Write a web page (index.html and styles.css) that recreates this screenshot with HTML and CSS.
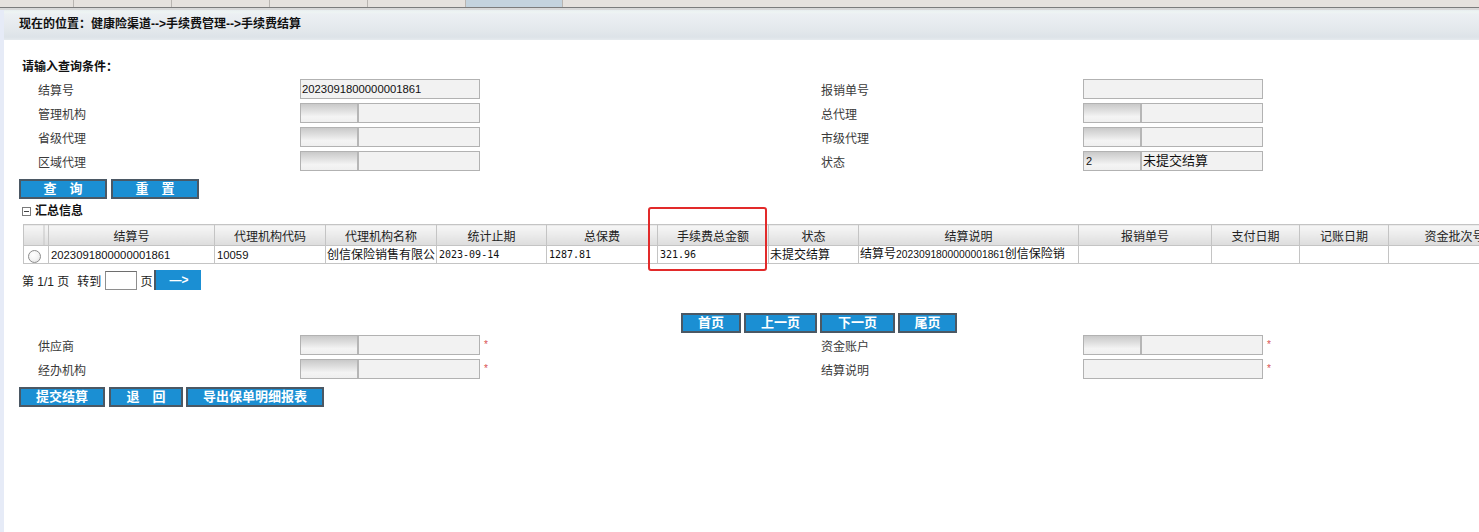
FILE: index.html
```html
<!DOCTYPE html>
<html lang="zh-CN">
<head>
<meta charset="utf-8">
<title>手续费结算</title>
<link rel="stylesheet" href="styles.css">
</head>
<body>
<div class="tabs">
  <div class="tab first"></div>
  <div class="tab"></div>
  <div class="tab"></div>
  <div class="tab"></div>
  <div class="tab"></div>
  <div class="tab active"></div>
  <div class="tab-rest"></div>
</div>
<div class="tabs-under"></div>
<div class="page">
  <div class="strip"></div>
  <div class="main">
    <div class="crumb">现在的位置：健康险渠道-->手续费管理-->手续费结算</div>
    <div class="content">
      <div class="title">请输入查询条件：</div>
      <div class="form">
        <div class="lbl">结算号</div>
        <div class="cell"><div class="field"><span class="val">2023091800000001861</span></div></div>
        <div class="lbl">报销单号</div>
        <div class="cell"><div class="field"></div></div>

        <div class="lbl">管理机构</div>
        <div class="cell"><div class="field code"><span class="c"></span><span class="n"></span></div></div>
        <div class="lbl">总代理</div>
        <div class="cell"><div class="field code"><span class="c"></span><span class="n"></span></div></div>

        <div class="lbl">省级代理</div>
        <div class="cell"><div class="field code"><span class="c"></span><span class="n"></span></div></div>
        <div class="lbl">市级代理</div>
        <div class="cell"><div class="field code"><span class="c"></span><span class="n"></span></div></div>

        <div class="lbl">区域代理</div>
        <div class="cell"><div class="field code"><span class="c"></span><span class="n"></span></div></div>
        <div class="lbl">状态</div>
        <div class="cell"><div class="field code"><span class="c">2</span><span class="n big">未提交结算</span></div></div>
      </div>

      <div class="btns top-btns">
        <span class="btn w88">查　询</span>
        <span class="btn w88">重　置</span>
      </div>

      <div class="section"><span class="minus"></span>汇总信息</div>

      <div class="tablewrap">
        <table class="grid">
          <colgroup>
            <col style="width:25px"><col style="width:166px"><col style="width:111px"><col style="width:111px">
            <col style="width:110px"><col style="width:111px"><col style="width:111px"><col style="width:90px">
            <col style="width:220px"><col style="width:133px"><col style="width:88px"><col style="width:89px">
            <col style="width:132px">
          </colgroup>
          <thead>
            <tr>
              <th class="rc"></th><th>结算号</th><th>代理机构代码</th><th>代理机构名称</th>
              <th>统计止期</th><th>总保费</th><th>手续费总金额</th><th>状态</th>
              <th>结算说明</th><th>报销单号</th><th>支付日期</th><th>记账日期</th><th>资金批次号</th>
            </tr>
          </thead>
          <tbody>
            <tr>
              <td class="rc"><span class="radio"></span></td>
              <td>2023091800000001861</td>
              <td>10059</td>
              <td class="cn">创信保险销售有限公</td>
              <td class="mono">2023-09-14</td>
              <td class="mono">1287.81</td>
              <td class="mono">321.96</td>
              <td class="cn">未提交结算</td>
              <td class="cn">结算号<span class="num">2023091800000001861</span>创信保险销</td>
              <td></td><td></td><td></td><td></td>
            </tr>
          </tbody>
        </table>
        <div class="mark"></div>
      </div>

      <div class="pager">
        <span>第 1/1 页</span>
        <span class="goto">转到</span>
        <span class="pin"></span>
        <span>页</span>
        <span class="btn go">—&gt;</span>
      </div>

      <div class="paging">
        <span class="btn w60">首页</span>
        <span class="btn w73">上一页</span>
        <span class="btn w75">下一页</span>
        <span class="btn w59">尾页</span>
      </div>

      <div class="form lower">
        <div class="lbl">供应商</div>
        <div class="cell"><div class="field code"><span class="c"></span><span class="n"></span></div><span class="req">*</span></div>
        <div class="lbl">资金账户</div>
        <div class="cell"><div class="field code"><span class="c"></span><span class="n"></span></div><span class="req">*</span></div>

        <div class="lbl">经办机构</div>
        <div class="cell"><div class="field code"><span class="c"></span><span class="n"></span></div><span class="req">*</span></div>
        <div class="lbl">结算说明</div>
        <div class="cell"><div class="field"></div><span class="req">*</span></div>
      </div>

      <div class="btns bottom-btns">
        <span class="btn w86">提交结算</span>
        <span class="btn w74">退　回</span>
        <span class="btn w138 tight">导出保单明细报表</span>
      </div>
    </div>
  </div>
</div>
</body>
</html>
```
FILE: styles.css
```css
html, body {
  margin: 0;
  padding: 0;
  overflow: hidden;
  background: #ffffff;
}
body {
  font-family: "Liberation Sans", "Noto Sans CJK SC", sans-serif;
  font-size: 12px;
  color: #222;
  width: 1479px;
  height: 532px;
}

/* top tab strip */
.tabs {
  display: flex;
  height: 7px;
  background: #e6e2de;
  border-bottom: 1px solid #7c7c7c;
}
.tab {
  width: 97px;
  flex: none;
  border-right: 1px solid #b9b5b1;
}
.tab.first { width: 73px; }
.tab.active {
  background: #c4d3de;
  width: 96px;
}
.tab-rest { flex: 1; }
.tabs-under {
  height: 2px;
  background: #d9d9d9;
}

.page {
  display: flex;
  height: 522px;
}
.strip {
  width: 4px;
  flex: none;
  background: #e6ebf7;
}
.main {
  flex: 1;
  min-width: 0;
  overflow: hidden;
}

.crumb {
  height: 30px;
  line-height: 28px;
  box-sizing: border-box;
  padding-left: 15px;
  font-weight: bold;
  font-size: 12px;
  color: #111;
  background: linear-gradient(to bottom, #e8eef0 0px, #eef5f3 2px, #ecf0f3 4px, #e3e8ec 20px, #dde3e8 27px, #e5eaee 30px);
}

.content {
  padding-left: 15px;
}

.title {
  margin-top: 19px;
  margin-left: 3px;
  height: 16px;
  line-height: 16px;
  font-weight: bold;
  color: #111;
}

.form {
  display: grid;
  grid-template-columns: 262px 521px 262px 400px;
  grid-auto-rows: 24px;
  padding-left: 19px;
  margin-top: 2px;
}
.form.lower { margin-top: 0; }
.lbl {
  display: flex;
  align-items: center;
  color: #3a3a3a;
}
.cell {
  display: flex;
  align-items: center;
}
.field {
  width: 180px;
  height: 20px;
  box-sizing: border-box;
  border: 1px solid #b2b2b2;
  background: #f2f2f2;
  display: flex;
  overflow: hidden;
}
.field .val {
  font-size: 11.3px;
  line-height: 18px;
  padding-left: 1px;
  color: #111;
}
.field.code .c {
  width: 58px;
  flex: none;
  border-right: 2px solid #b6b6b6;
  background: linear-gradient(to bottom, #c9c9c9 0%, #e4e4e4 45%, #f4f4f4 70%, #efefef 100%);
  font-size: 11px;
  line-height: 18px;
  padding-left: 2px;
  box-sizing: border-box;
  color: #111;
}
.field.code .n {
  flex: 1;
  background: #f2f2f2;
  line-height: 18px;
  padding-left: 1px;
}
.field.code .n.big {
  font-size: 13px;
  color: #111;
}
.req {
  color: #d85050;
  font-size: 10px;
  margin-left: 4px;
  margin-top: -2px;
}

/* buttons */
.btns {
  display: flex;
  gap: 4px;
}
.top-btns { margin-top: 6px; }
.bottom-btns { margin-top: 6px; }
.btn {
  display: inline-flex;
  align-items: center;
  justify-content: center;
  height: 20px;
  box-sizing: border-box;
  border: 2px solid #4b5864;
  background: #1b8fd3;
  color: #ffffff;
  font-weight: bold;
  font-size: 13px;
  line-height: 16px;
}
.btn.tight { margin-left: -1px; }
.w88 { width: 88px; }
.w86 { width: 86px; }
.w74 { width: 74px; }
.w138 { width: 138px; }
.w60 { width: 60px; }
.w73 { width: 73px; }
.w75 { width: 75px; }
.w59 { width: 59px; }

.section {
  margin-top: 5px;
  margin-left: 3px;
  height: 14px;
  line-height: 14px;
  font-weight: bold;
  color: #111;
  display: flex;
  align-items: center;
}
.minus {
  width: 7px;
  height: 7px;
  border: 1px solid #7a7a7a;
  margin-right: 4px;
  position: relative;
  background: #fff;
}
.minus::after {
  content: "";
  position: absolute;
  left: 1px;
  right: 1px;
  top: 3px;
  height: 1px;
  background: #444;
}

/* table */
.tablewrap {
  position: relative;
  margin-top: 6px;
  margin-left: 4px;
  width: 1497px;
}
.grid {
  border-collapse: collapse;
  table-layout: fixed;
  width: 1497px;
}
.grid th {
  height: 20px;
  padding: 0;
  font-weight: normal;
  font-size: 12px;
  color: #222;
  border: 1px solid #c4c4c4;
  background: linear-gradient(to bottom, #f6f6f6 0%, #ececec 45%, #dcdcdc 100%);
  white-space: nowrap;
  overflow: hidden;
}
.grid th.rc {
  background:
    linear-gradient(to right, transparent 19px, #c4c4c4 19px, #c4c4c4 20px, transparent 20px),
    linear-gradient(to bottom, #f6f6f6 0%, #ececec 45%, #dcdcdc 100%);
}
.grid td {
  height: 16px;
  padding: 0 0 0 2px;
  border: 1px solid #c4c4c4;
  background: #fff;
  white-space: nowrap;
  overflow: hidden;
  font-size: 11.3px;
  line-height: 16px;
  color: #111;
}
.grid td.mono {
  font-family: "DejaVu Sans Mono", "Noto Sans CJK SC", monospace;
  font-size: 10px;
}
.grid td.cn {
  padding-left: 1px;
  font-size: 12px;
}
.grid td .num {
  font-size: 10.3px;
}
.grid td.rc {
  padding: 0;
  text-align: center;
}
.radio {
  display: inline-block;
  width: 11px;
  height: 11px;
  border-radius: 50%;
  border: 1px solid #8c8c8c;
  background: radial-gradient(circle at 40% 35%, #ffffff 0%, #f4f4f4 50%, #dcdcdc 100%);
  vertical-align: middle;
  margin-top: 2px;
  margin-right: 3px;
}
.mark {
  position: absolute;
  left: 625px;
  top: -17px;
  width: 115px;
  height: 60px;
  border: 2px solid #e22a2a;
  border-radius: 3px;
}

/* pager */
.pager {
  margin-top: 6px;
  margin-left: 3px;
  height: 20px;
  display: flex;
  align-items: center;
  color: #222;
}
.goto { margin-left: 8px; }
.pin {
  width: 32px;
  height: 19px;
  box-sizing: border-box;
  border: 1px solid #8e8e8e;
  border-top-color: #6e6e6e;
  background: #fff;
  margin: 0 3px 0 4px;
}
.btn.go {
  width: 47px;
  border: none;
  background: #1b8fd3;
  border-left: 2px solid #4b5864;
  margin-left: 2px;
  font-size: 12px;
}

.paging {
  margin-top: 23px;
  padding-left: 662px;
  display: flex;
  gap: 3px;
}
```
